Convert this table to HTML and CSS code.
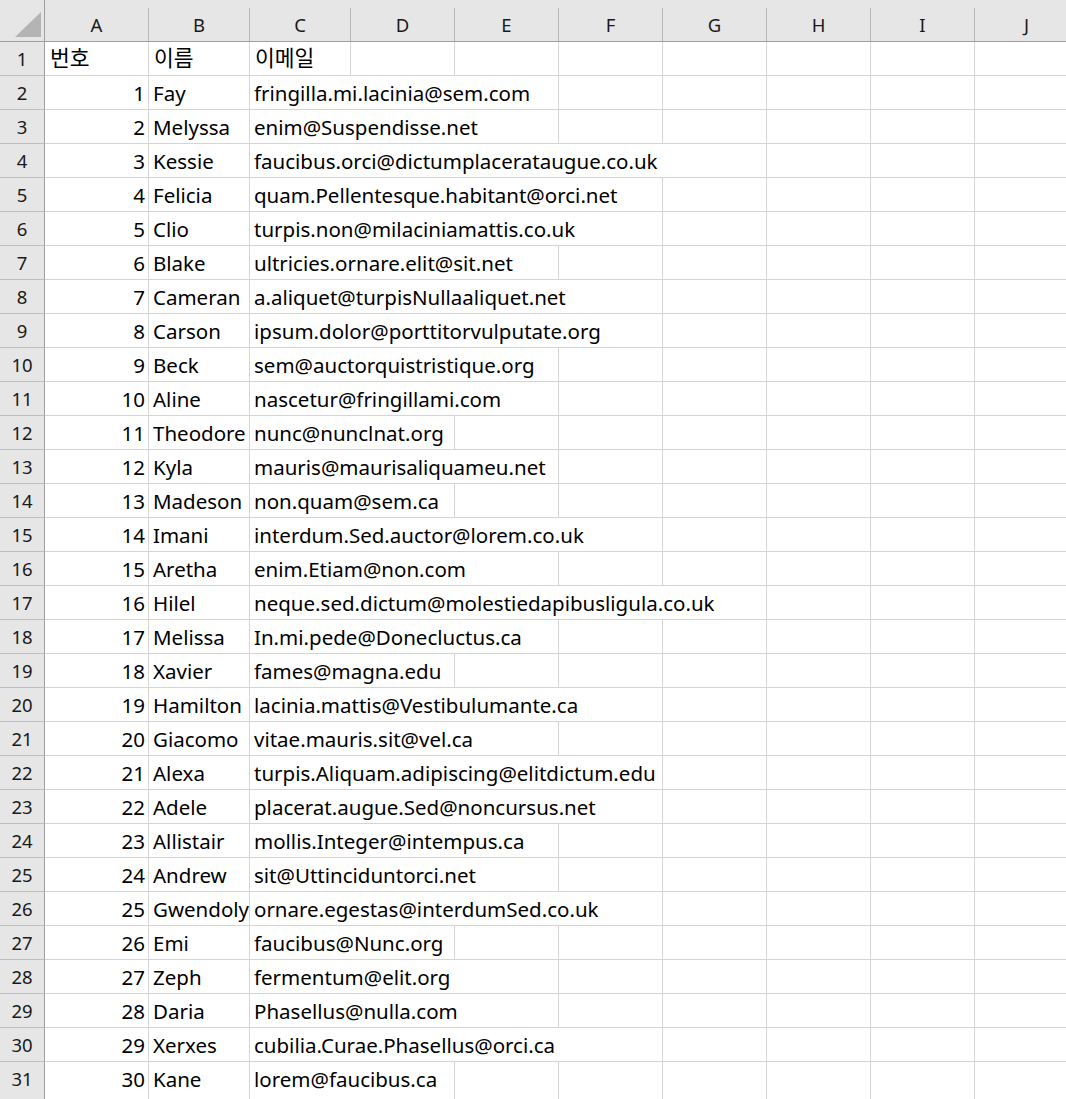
FILE: index.html
```html
<!DOCTYPE html>
<html lang="ko">
<head>
<meta charset="utf-8">
<title>Sheet</title>
<link rel="stylesheet" href="styles.css">
</head>
<body>
<div class="sheet">
  <div class="row head">
    <div class="corner"><svg width="44" height="41" viewBox="0 0 44 41"><polygon points="15,37 41,12 41,37" fill="#b4b4b4"/></svg></div>
    <div class="ch">A</div><div class="ch">B</div><div class="ch">C</div><div class="ch">D</div><div class="ch">E</div><div class="ch">F</div><div class="ch">G</div><div class="ch">H</div><div class="ch">I</div><div class="ch">J</div>
  </div>
  <div class="row"><div class="rh">1</div><div class="c ko">번호</div><div class="c ko">이름</div><div class="c ko">이메일</div><div class="c"></div><div class="c"></div><div class="c"></div><div class="c"></div><div class="c"></div><div class="c"></div><div class="c"></div></div>
  <div class="row"><div class="rh">2</div><div class="c num">1</div><div class="c">Fay</div><div class="c s3">fringilla.mi.lacinia@sem.com</div><div class="c"></div><div class="c"></div><div class="c"></div><div class="c"></div><div class="c"></div></div>
  <div class="row"><div class="rh">3</div><div class="c num">2</div><div class="c">Melyssa</div><div class="c s3">enim@Suspendisse.net</div><div class="c"></div><div class="c"></div><div class="c"></div><div class="c"></div><div class="c"></div></div>
  <div class="row"><div class="rh">4</div><div class="c num">3</div><div class="c">Kessie</div><div class="c s5">faucibus.orci@dictumplacerataugue.co.uk</div><div class="c"></div><div class="c"></div><div class="c"></div></div>
  <div class="row"><div class="rh">5</div><div class="c num">4</div><div class="c">Felicia</div><div class="c s4">quam.Pellentesque.habitant@orci.net</div><div class="c"></div><div class="c"></div><div class="c"></div><div class="c"></div></div>
  <div class="row"><div class="rh">6</div><div class="c num">5</div><div class="c">Clio</div><div class="c s4">turpis.non@milaciniamattis.co.uk</div><div class="c"></div><div class="c"></div><div class="c"></div><div class="c"></div></div>
  <div class="row"><div class="rh">7</div><div class="c num">6</div><div class="c">Blake</div><div class="c s3">ultricies.ornare.elit@sit.net</div><div class="c"></div><div class="c"></div><div class="c"></div><div class="c"></div><div class="c"></div></div>
  <div class="row"><div class="rh">8</div><div class="c num">7</div><div class="c">Cameran</div><div class="c s4">a.aliquet@turpisNullaaliquet.net</div><div class="c"></div><div class="c"></div><div class="c"></div><div class="c"></div></div>
  <div class="row"><div class="rh">9</div><div class="c num">8</div><div class="c">Carson</div><div class="c s4">ipsum.dolor@porttitorvulputate.org</div><div class="c"></div><div class="c"></div><div class="c"></div><div class="c"></div></div>
  <div class="row"><div class="rh">10</div><div class="c num">9</div><div class="c">Beck</div><div class="c s3">sem@auctorquistristique.org</div><div class="c"></div><div class="c"></div><div class="c"></div><div class="c"></div><div class="c"></div></div>
  <div class="row"><div class="rh">11</div><div class="c num">10</div><div class="c">Aline</div><div class="c s3">nascetur@fringillami.com</div><div class="c"></div><div class="c"></div><div class="c"></div><div class="c"></div><div class="c"></div></div>
  <div class="row"><div class="rh">12</div><div class="c num">11</div><div class="c">Theodore</div><div class="c s2">nunc@nunclnat.org</div><div class="c"></div><div class="c"></div><div class="c"></div><div class="c"></div><div class="c"></div><div class="c"></div></div>
  <div class="row"><div class="rh">13</div><div class="c num">12</div><div class="c">Kyla</div><div class="c s3">mauris@maurisaliquameu.net</div><div class="c"></div><div class="c"></div><div class="c"></div><div class="c"></div><div class="c"></div></div>
  <div class="row"><div class="rh">14</div><div class="c num">13</div><div class="c">Madeson</div><div class="c s2">non.quam@sem.ca</div><div class="c"></div><div class="c"></div><div class="c"></div><div class="c"></div><div class="c"></div><div class="c"></div></div>
  <div class="row"><div class="rh">15</div><div class="c num">14</div><div class="c">Imani</div><div class="c s4">interdum.Sed.auctor@lorem.co.uk</div><div class="c"></div><div class="c"></div><div class="c"></div><div class="c"></div></div>
  <div class="row"><div class="rh">16</div><div class="c num">15</div><div class="c">Aretha</div><div class="c s3">enim.Etiam@non.com</div><div class="c"></div><div class="c"></div><div class="c"></div><div class="c"></div><div class="c"></div></div>
  <div class="row"><div class="rh">17</div><div class="c num">16</div><div class="c">Hilel</div><div class="c s5">neque.sed.dictum@molestiedapibusligula.co.uk</div><div class="c"></div><div class="c"></div><div class="c"></div></div>
  <div class="row"><div class="rh">18</div><div class="c num">17</div><div class="c">Melissa</div><div class="c s3">In.mi.pede@Donecluctus.ca</div><div class="c"></div><div class="c"></div><div class="c"></div><div class="c"></div><div class="c"></div></div>
  <div class="row"><div class="rh">19</div><div class="c num">18</div><div class="c">Xavier</div><div class="c s2">fames@magna.edu</div><div class="c"></div><div class="c"></div><div class="c"></div><div class="c"></div><div class="c"></div><div class="c"></div></div>
  <div class="row"><div class="rh">20</div><div class="c num">19</div><div class="c">Hamilton</div><div class="c s4">lacinia.mattis@Vestibulumante.ca</div><div class="c"></div><div class="c"></div><div class="c"></div><div class="c"></div></div>
  <div class="row"><div class="rh">21</div><div class="c num">20</div><div class="c">Giacomo</div><div class="c s3">vitae.mauris.sit@vel.ca</div><div class="c"></div><div class="c"></div><div class="c"></div><div class="c"></div><div class="c"></div></div>
  <div class="row"><div class="rh">22</div><div class="c num">21</div><div class="c">Alexa</div><div class="c s4">turpis.Aliquam.adipiscing@elitdictum.edu</div><div class="c"></div><div class="c"></div><div class="c"></div><div class="c"></div></div>
  <div class="row"><div class="rh">23</div><div class="c num">22</div><div class="c">Adele</div><div class="c s4">placerat.augue.Sed@noncursus.net</div><div class="c"></div><div class="c"></div><div class="c"></div><div class="c"></div></div>
  <div class="row"><div class="rh">24</div><div class="c num">23</div><div class="c">Allistair</div><div class="c s3">mollis.Integer@intempus.ca</div><div class="c"></div><div class="c"></div><div class="c"></div><div class="c"></div><div class="c"></div></div>
  <div class="row"><div class="rh">25</div><div class="c num">24</div><div class="c">Andrew</div><div class="c s3">sit@Uttinciduntorci.net</div><div class="c"></div><div class="c"></div><div class="c"></div><div class="c"></div><div class="c"></div></div>
  <div class="row"><div class="rh">26</div><div class="c num">25</div><div class="c">Gwendolyn</div><div class="c s4">ornare.egestas@interdumSed.co.uk</div><div class="c"></div><div class="c"></div><div class="c"></div><div class="c"></div></div>
  <div class="row"><div class="rh">27</div><div class="c num">26</div><div class="c">Emi</div><div class="c s2">faucibus@Nunc.org</div><div class="c"></div><div class="c"></div><div class="c"></div><div class="c"></div><div class="c"></div><div class="c"></div></div>
  <div class="row"><div class="rh">28</div><div class="c num">27</div><div class="c">Zeph</div><div class="c s3">fermentum@elit.org</div><div class="c"></div><div class="c"></div><div class="c"></div><div class="c"></div><div class="c"></div></div>
  <div class="row"><div class="rh">29</div><div class="c num">28</div><div class="c">Daria</div><div class="c s3">Phasellus@nulla.com</div><div class="c"></div><div class="c"></div><div class="c"></div><div class="c"></div><div class="c"></div></div>
  <div class="row"><div class="rh">30</div><div class="c num">29</div><div class="c">Xerxes</div><div class="c s4">cubilia.Curae.Phasellus@orci.ca</div><div class="c"></div><div class="c"></div><div class="c"></div><div class="c"></div></div>
  <div class="row last"><div class="rh">31</div><div class="c num">30</div><div class="c">Kane</div><div class="c s2">lorem@faucibus.ca</div><div class="c"></div><div class="c"></div><div class="c"></div><div class="c"></div><div class="c"></div><div class="c"></div></div>
</div>
</body>
</html>
```

FILE: styles.css
```css
html, body {
  margin: 0;
  padding: 0;
  background: #ffffff;
}
body {
  width: 1066px;
  height: 1099px;
  overflow: hidden;
  font-family: "Noto Sans", "Noto Sans CJK KR", sans-serif;
  color: #000000;
}
.sheet {
  display: flex;
  flex-direction: column;
  width: 1079px;
}
.row {
  display: grid;
  grid-template-columns: 45px 104px 101px 101px 104px 104px 104px 104px 104px 104px 104px;
  height: 34px;
}
.row.last {
  height: 38px;
}
.row.last .rh,
.row.last .c {
  padding-bottom: 4px;
}
.row.head {
  height: 42px;
  background: #e6e6e6;
  border-bottom: 1px solid #9f9f9f;
  box-sizing: border-box;
}
.corner {
  border-right: 1px solid #9f9f9f;
  height: 41px;
  box-sizing: border-box;
  overflow: hidden;
}
.corner svg {
  display: block;
}
.ch {
  align-self: end;
  height: 33px;
  border-right: 1px solid #b8b8b8;
  box-sizing: border-box;
  display: flex;
  align-items: center;
  justify-content: center;
  font-size: 18.5px;
  color: #1a1a1a;
}
.rh {
  background: #e6e6e6;
  border-right: 1px solid #9f9f9f;
  border-bottom: 1px solid #bdbdbd;
  box-sizing: border-box;
  display: flex;
  align-items: center;
  justify-content: center;
  font-size: 18.5px;
  color: #1a1a1a;
}
.c {
  border-right: 1px solid #d4d4d4;
  border-bottom: 1px solid #d4d4d4;
  box-sizing: border-box;
  display: flex;
  align-items: center;
  padding: 0 3px 0 4px;
  font-size: 20.5px;
  white-space: nowrap;
  overflow: hidden;
}
.c.ko {
  font-size: 21.5px;
  padding-left: 5px;
  padding-bottom: 4px;
}
.c.num {
  justify-content: flex-end;
}
.s2 { grid-column: span 2; }
.s3 { grid-column: span 3; }
.s4 { grid-column: span 4; }
.s5 { grid-column: span 5; }
```
